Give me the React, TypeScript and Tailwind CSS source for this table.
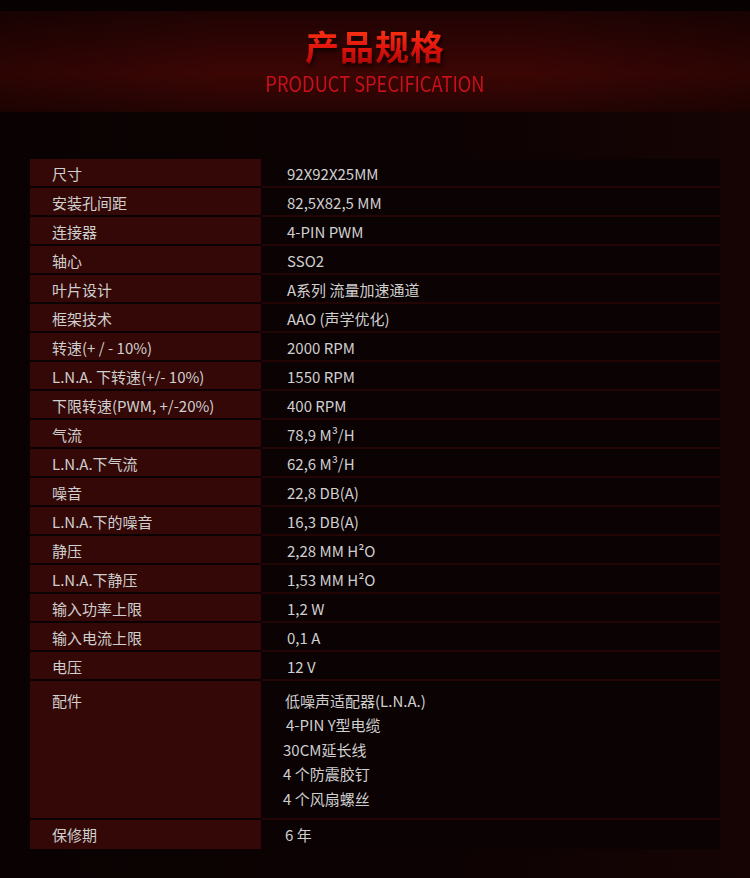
import React from "react";

const rows: [string, string][] = [
  ["尺寸", "92X92X25MM"],
  ["安装孔间距", "82,5X82,5 MM"],
  ["连接器", "4-PIN PWM"],
  ["轴心", "SSO2"],
  ["叶片设计", "A系列 流量加速通道"],
  ["框架技术", "AAO (声学优化)"],
  ["转速(+ / - 10%)", "2000 RPM"],
  ["L.N.A. 下转速(+/- 10%)", "1550 RPM"],
  ["下限转速(PWM, +/-20%)", "400 RPM"],
  ["气流", "78,9 M³/H"],
  ["L.N.A.下气流", "62,6 M³/H"],
  ["噪音", "22,8 DB(A)"],
  ["L.N.A.下的噪音", "16,3 DB(A)"],
  ["静压", "2,28 MM H²O"],
  ["L.N.A.下静压", "1,53 MM H²O"],
  ["输入功率上限", "1,2 W"],
  ["输入电流上限", "0,1 A"],
  ["电压", "12 V"],
];

const accessories: [string, string][] = [
  ["低噪声适配器(L.N.A.)", "pl-[24px]"],
  ["4-PIN Y型电缆", "pl-[25px]"],
  ["30CM延长线", "pl-[22px]"],
  ["4 个防震胶钉", "pl-[22px]"],
  ["4 个风扇螺丝", "pl-[22px]"],
];

export default function App() {
  return (
    <div
      className="w-[750px] h-[878px] overflow-hidden bg-[linear-gradient(to_right,#0a0202,#0d0203_60%,#160404)] text-[#cfcfcf]"
      style={{ fontFamily: '"Noto Sans CJK SC", "Noto Sans", sans-serif' }}
    >
      <div className="h-[11px] bg-[#070102]" />
      <div className="relative h-[101px] bg-[linear-gradient(to_bottom,#1f0303,#340504_45%,#3b0604_62%,#240403)]">
        <div className="absolute inset-0 bg-[linear-gradient(to_right,rgba(0,0,0,0.25),rgba(0,0,0,0)_30%,rgba(0,0,0,0)_70%,rgba(0,0,0,0.25))]" />
        <div className="relative flex flex-col items-center pt-[15px]">
          <div className="text-[34px] leading-[40px] font-bold tracking-[1px] bg-[linear-gradient(to_bottom,#ff3a14,#e0140c_55%,#a80606)] bg-clip-text text-transparent drop-shadow-[2px_3px_2px_rgba(0,0,0,0.7)]">
            产品规格
          </div>
          <div className="mt-[4px] text-[21px] leading-[26px] text-[#c8101a] scale-x-[0.87] whitespace-nowrap">
            PRODUCT SPECIFICATION
          </div>
        </div>
      </div>

      <div className="pt-[47px] pl-[30px]">
        <div className="w-[690px] bg-[#0b0203]">
          {rows.map(([k, v], i) => (
            <div key={i} className="grid grid-cols-[231px_459px] h-[29px]">
              <div className="h-[29px] flex flex-col">
                <div className="h-[27px] bg-[#340806] pl-[22px] text-[15px] leading-[29px]">{k}</div>
                <div className="h-[2px] bg-[#0b0203]" />
              </div>
              <div className="h-[29px] flex flex-col">
                <div className="h-[27px] pl-[26px] text-[15px] leading-[29px]">{v}</div>
                <div className="h-[2px] bg-[#240505]" />
              </div>
            </div>
          ))}
          <div className="grid grid-cols-[231px_459px] h-[139px]">
            <div className="flex flex-col">
              <div className="h-[137px] bg-[#340806] pl-[22px] pt-[8px] text-[15px] leading-[24px]">配件</div>
              <div className="h-[2px] bg-[#0b0203]" />
            </div>
            <div className="flex flex-col">
              <div className="h-[137px] pt-[8px] text-[15px] leading-[24.4px] flex flex-col">
                {accessories.map(([t, p], i) => (
                  <div key={i} className={p}>
                    {t}
                  </div>
                ))}
              </div>
              <div className="h-[2px] bg-[#240505]" />
            </div>
          </div>
          <div className="grid grid-cols-[231px_459px] h-[29px]">
            <div className="bg-[#340806] pl-[22px] text-[15px] leading-[29px]">保修期</div>
            <div className="pl-[24px] text-[15px] leading-[29px]">6 年</div>
          </div>
        </div>
      </div>
    </div>
  );
}
